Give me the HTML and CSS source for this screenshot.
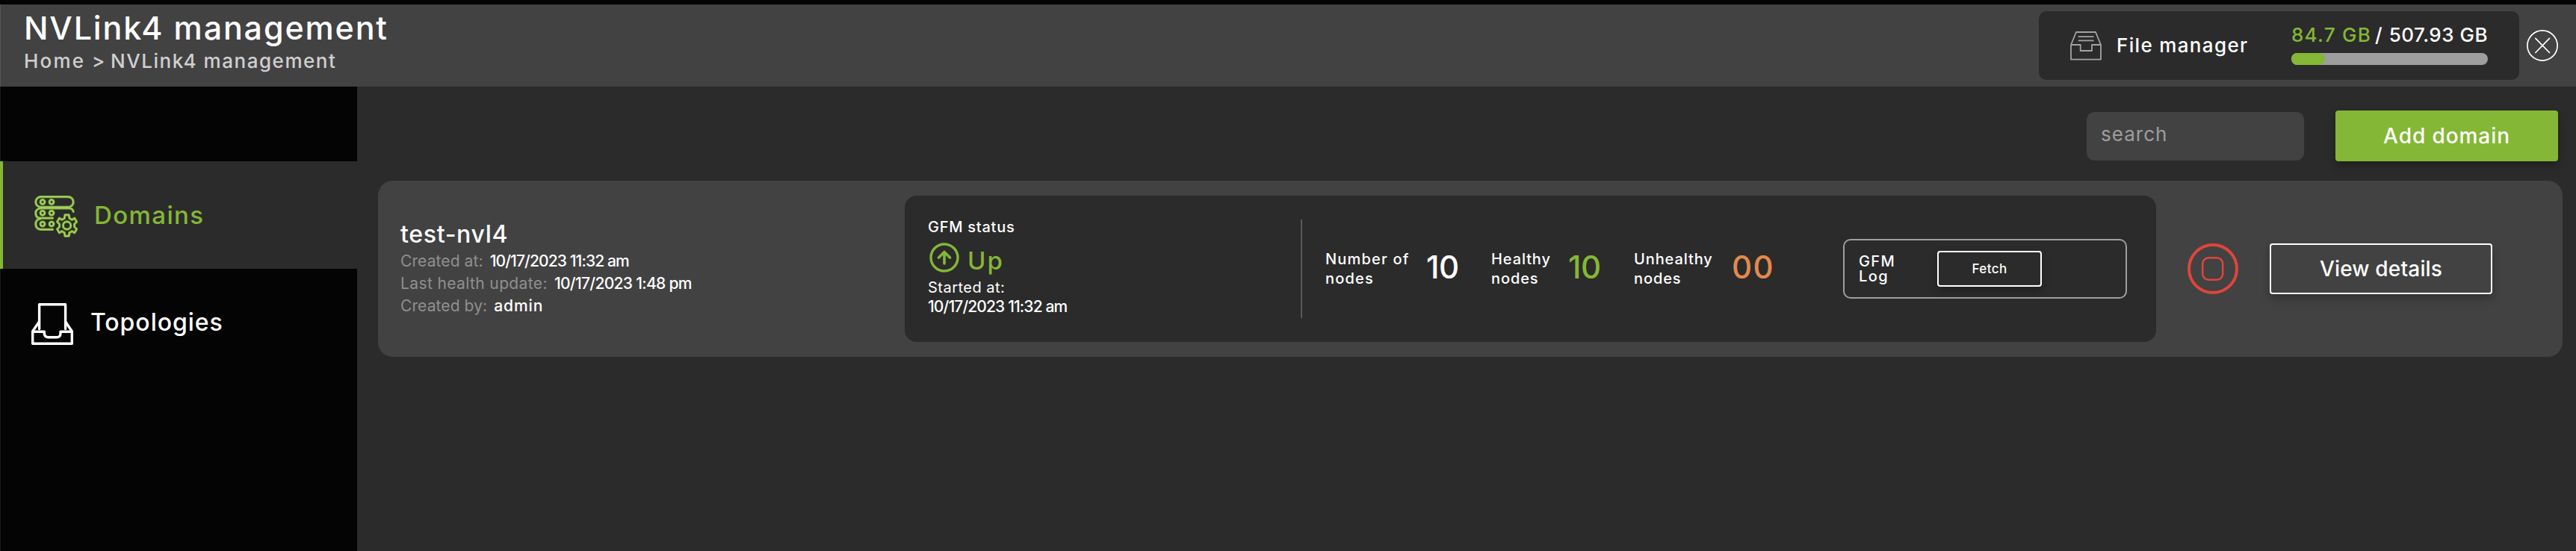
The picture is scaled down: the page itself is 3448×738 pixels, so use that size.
FILE: index.html
```html
<!DOCTYPE html>
<html lang="en">
<head>
<meta charset="utf-8">
<title>NVLink4 management</title>
<link rel="stylesheet" href="styles.css">
</head>
<body>
<header class="header">
  <div class="heading">
    <h1 class="title">NVLink4 management</h1>
    <nav class="crumbs"><span class="crumb-home">Home</span><span class="crumb-sep">&gt;</span><span class="crumb-current">NVLink4 management</span></nav>
  </div>
  <div class="files">
    <svg class="files-icon" viewBox="0 0 42 40" fill="none" stroke="#a3a3a3" stroke-width="1.8" stroke-linejoin="round"><path d="M1 19L8 2H34L41 19V38.6H1V19H13.7V27H29V19H41"/><path d="M10.7 8.2H31.5M10.7 13.4H31.5"/></svg>
    <span class="files-label">File manager</span>
    <div class="usage">
      <div class="usage-text"><span class="used">84.7 GB</span><span class="slash">/</span><span class="total">507.93 GB</span></div>
      <div class="bar"><div class="bar-fill"></div></div>
    </div>
  </div>
  <svg class="close" viewBox="0 0 42 42" fill="none" stroke="#fff"><circle cx="21" cy="21" r="20.1" stroke-width="1.7"/><path d="M11.8 11.3L30.5 30.5M30.5 11.3L11.8 30.5" stroke-width="1.7" stroke-linecap="round"/></svg>
</header>
<div class="body">
  <aside class="sidebar">
    <a class="item item-active">
      <svg class="domains-icon" viewBox="0 0 58 56" fill="none" stroke-linecap="round" stroke-linejoin="round">
        <defs><g id="rack">
          <rect x="1.8" y="1.6" width="50.4" height="13.8" rx="6.9"/>
          <path d="M8 17H46Q51.5 17 52.2 21.5"/>
          <path d="M8 17Q1.8 18 1.8 23.5Q1.8 30 8 30.2H24.5"/>
          <path d="M8 31Q1.8 32 1.8 38Q1.8 45 9 45.3H24.5"/>
          <circle cx="11" cy="8.5" r="2.9"/><circle cx="23" cy="8.5" r="2.9"/>
          <circle cx="11" cy="23.3" r="2.9"/><circle cx="23" cy="23.3" r="2.9"/>
          <circle cx="11" cy="38" r="2.9"/><circle cx="23" cy="38" r="2.9"/>
          <g transform="translate(43.6 40)"><path d="M-3.4-9.6L-2.6-14.2H2.6L3.4-9.6Q5-9 6.6-7.7L10.2-9.8L13.1-4.8L10-1.9V1.9L13.1 4.8L10.2 9.8L6.6 7.7Q5 9 3.4 9.6L2.6 14.2H-2.6L-3.4 9.6Q-5 9-6.6 7.7L-10.2 9.8L-13.1 4.8L-10 1.9V-1.9L-13.1-4.8L-10.2-9.8L-6.6-7.7Q-5-9-3.4-9.6Z"/><circle r="5.2"/></g>
        </g></defs>
        <use href="#rack" stroke="#84b735" stroke-width="3.2"/>
        <use href="#rack" stroke="#c4de98" stroke-width=".8"/>
      </svg>
      <span class="item-label domains-label">Domains</span>
    </a>
    <a class="item">
      <svg class="topo-icon" viewBox="0 0 56 56" fill="none" stroke="#fff" stroke-width="3.4" stroke-linejoin="round" stroke-linecap="round"><path d="M10.6 34.5V1.7H45.6V34.5"/><path d="M10 25.5L1.7 37.8V54.3H54.3V37.8L46 25.5"/><path d="M1.7 38.3H17.3V41Q18 45.7 22.5 45.7H34Q38.7 45.7 39 41V38.3H54.3"/></svg>
      <span class="item-label topo-label">Topologies</span>
    </a>
  </aside>
  <main class="main">
    <div class="toolbar">
      <input class="search" type="text" placeholder="search">
      <button class="add">Add domain</button>
    </div>
    <section class="card">
      <div class="info">
        <h2 class="name">test-nvl4</h2>
        <div class="line"><span class="key">Created at:</span><span class="val">10/17/2023 11:32 am</span></div>
        <div class="line"><span class="key key-wide">Last health update:</span><span class="val val-loose">10/17/2023 1:48 pm</span></div>
        <div class="line"><span class="key">Created by:</span><span class="val val-name">admin</span></div>
      </div>
      <div class="panel">
        <div class="status">
          <div class="status-title">GFM status</div>
          <div class="status-row">
            <svg class="up-icon" viewBox="0 0 40 40" fill="none" stroke="#84b735" stroke-linecap="round" stroke-linejoin="round"><circle cx="20" cy="20" r="18" stroke-width="3.4"/><path d="M20 28V13M12.5 20L20 12.5L27.5 20" stroke-width="3.6"/></svg>
            <span class="up">Up</span>
          </div>
          <div class="started">Started at:</div>
          <div class="started-date">10/17/2023 11:32 am</div>
        </div>
        <div class="divider"></div>
        <div class="metrics">
          <div class="label label-number">Number of<br>nodes</div><div class="num">10</div>
          <div class="label">Healthy<br>nodes</div><div class="num num-green">10</div>
          <div class="label">Unhealthy<br>nodes</div><div class="num num-orange">00</div>
        </div>
        <div class="log">
          <div class="log-label">GFM<br>Log</div>
          <button class="fetch">Fetch</button>
        </div>
      </div>
      <svg class="stop" viewBox="0 0 68 68" fill="none" stroke="#e0453c"><circle cx="34" cy="34" r="32" stroke-width="4"/><rect x="20.2" y="19.2" width="27" height="29.6" rx="8" stroke-width="2.5"/></svg>
      <button class="view">View details</button>
    </section>
  </main>
</div>
</body>
</html>
```
FILE: styles.css
```css
* { box-sizing: border-box; }
body { margin: 0; height: 738px; overflow: hidden; background: #2b2b2b; color: #fff; font-family: "Inter", sans-serif; font-weight: 500; display: flex; flex-direction: column; }
h1, h2 { margin: 0; font-weight: 500; }
button, input { font-family: inherit; margin: 0; }
svg { display: block; flex: none; }

.header { flex: none; height: 116px; border-top: 6px solid #040404; background: #424242; box-shadow: inset 1px 0 #555; display: flex; padding: 0 24px 0 32px; }
.heading { padding-top: 7px; margin-right: auto; }
.title { font-size: 43px; line-height: 48px; letter-spacing: 1.85px; white-space: nowrap; }
.crumbs { display: flex; margin-top: 5px; font-size: 26px; line-height: 32px; color: #cfcfcf; white-space: nowrap; }
.crumb-home { width: 91px; letter-spacing: 2.2px; }
.crumb-sep { width: 25px; }
.crumb-current { letter-spacing: 1.53px; }

.files { width: 643px; height: 92px; margin-top: 9px; border-radius: 10px; background: #2b2b2b; display: flex; align-items: center; padding-left: 42px; white-space: nowrap; }
.files-icon { width: 42px; height: 40px; }
.files-label { width: 234px; margin-left: 20px; font-size: 26px; line-height: 36px; letter-spacing: 1.34px; }
.usage { width: 263px; align-self: flex-start; margin-top: 17px; }
.usage-text { display: flex; font-size: 26px; line-height: 30px; }
.used { width: 114px; color: #84b735; letter-spacing: 1.25px; }
.slash { width: 19px; }
.total { letter-spacing: .5px; }
.bar { height: 16px; margin-top: 9px; border-radius: 8px; background: #9e9e9e; }
.bar-fill { width: 45px; height: 16px; border-radius: 8px; background: #84b735; }
.close { width: 42px; height: 42px; margin: 34px 0 0 10px; }

.body { flex: 1; display: flex; min-height: 0; }
.sidebar { width: 478px; flex: none; padding-top: 100px; background: #040404; box-shadow: inset 1px 0 #1b1b1b; }
.item { display: flex; align-items: center; height: 144px; padding-left: 42px; }
.item-active { background: #2b2b2b; border-left: 4px solid #84b735; color: #84b735; }
.domains-icon { width: 58px; height: 56px; margin-top: 4px; }
.topo-icon { width: 56px; height: 56px; margin-top: 4px; }
.item-label { font-size: 32px; line-height: 40px; }
.domains-label { margin-left: 22px; font-size: 33px; letter-spacing: 1.4px; }
.topo-label { margin-left: 23px; letter-spacing: .95px; }

.main { flex: 1; padding: 32px 18px 0 28px; }
.toolbar { display: flex; justify-content: flex-end; align-items: center; height: 68px; gap: 42px; padding-right: 6px; }
.search { width: 291px; height: 65px; border: 0; border-radius: 10px; background: #424242; padding: 0 18px 6px 19px; font-size: 26px; color: #fff; letter-spacing: 1.01px; }
.search::placeholder { color: #9e9e9e; opacity: 1; }
.add { width: 298px; height: 68px; border: 0; border-radius: 4px; background: #84b735; color: #fff; font-size: 28px; font-weight: 500; letter-spacing: .92px; box-shadow: 0 6px 12px rgba(0, 0, 0, .25); }

.card { display: flex; align-items: center; height: 236px; margin-top: 26px; border-radius: 20px; background: #424242; }
.info { width: 705px; align-self: flex-start; padding: 52px 0 0 30px; white-space: nowrap; }
.name { font-size: 32px; line-height: 40px; letter-spacing: .68px; margin-bottom: 1px; }
.line { display: flex; gap: 9px; font-size: 21px; line-height: 30px; }
.key { color: #8f8f8f; font-weight: 400; letter-spacing: .1px; }
.key-wide { letter-spacing: .38px; }
.val { letter-spacing: -.87px; }
.val-loose { letter-spacing: -.67px; }
.val-name { letter-spacing: .91px; }

.panel { width: 1675px; height: 196px; border-radius: 16px; background: #2b2b2b; display: flex; align-items: center; white-space: nowrap; }
.status { width: 530px; align-self: flex-start; padding: 29px 0 0 31px; }
.status-title { font-size: 20px; line-height: 26px; letter-spacing: .75px; }
.status-row { display: flex; height: 48px; margin: 8px 0 0 2px; }
.up-icon { width: 40px; height: 40px; }
.up { margin: 4px 0 0 11px; font-size: 33px; line-height: 40px; color: #84b735; letter-spacing: 2px; }
.started { font-size: 20px; line-height: 25px; font-weight: 400; letter-spacing: .48px; }
.started-date { font-size: 21px; line-height: 25px; letter-spacing: -.87px; }
.divider { width: 2px; height: 132px; background: #585858; }
.metrics { display: grid; grid-template-columns: 135px 87px 103px 88px 131px 149px; align-items: center; padding-left: 31px; }
.label { font-size: 20px; line-height: 26px; letter-spacing: .9px; }
.label-number { letter-spacing: 1.2px; }
.num { font-size: 42px; line-height: 48px; letter-spacing: -.4px; padding-bottom: 5px; }
.num-green { color: #84b735; }
.num-orange { color: #e38a4b; letter-spacing: 1.5px; }
.log { width: 380px; height: 80px; border: 2px solid #9e9e9e; border-radius: 10px; display: flex; align-items: center; padding-left: 19px; }
.log-label { width: 105px; font-size: 20px; line-height: 20px; letter-spacing: 1.4px; }
.fetch { width: 140px; height: 48px; border: 2px solid #fff; border-radius: 4px; background: transparent; color: #fff; font-size: 17px; font-weight: 500; letter-spacing: .42px; box-shadow: 0 6px 12px rgba(0, 0, 0, .25); }
.stop { width: 68px; height: 68px; margin-left: 42px; }
.view { width: 298px; height: 68px; margin-left: 42px; border: 2px solid #fff; border-radius: 4px; background: transparent; color: #fff; font-size: 28px; font-weight: 500; letter-spacing: .18px; box-shadow: 0 6px 12px rgba(0, 0, 0, .25); }
```
